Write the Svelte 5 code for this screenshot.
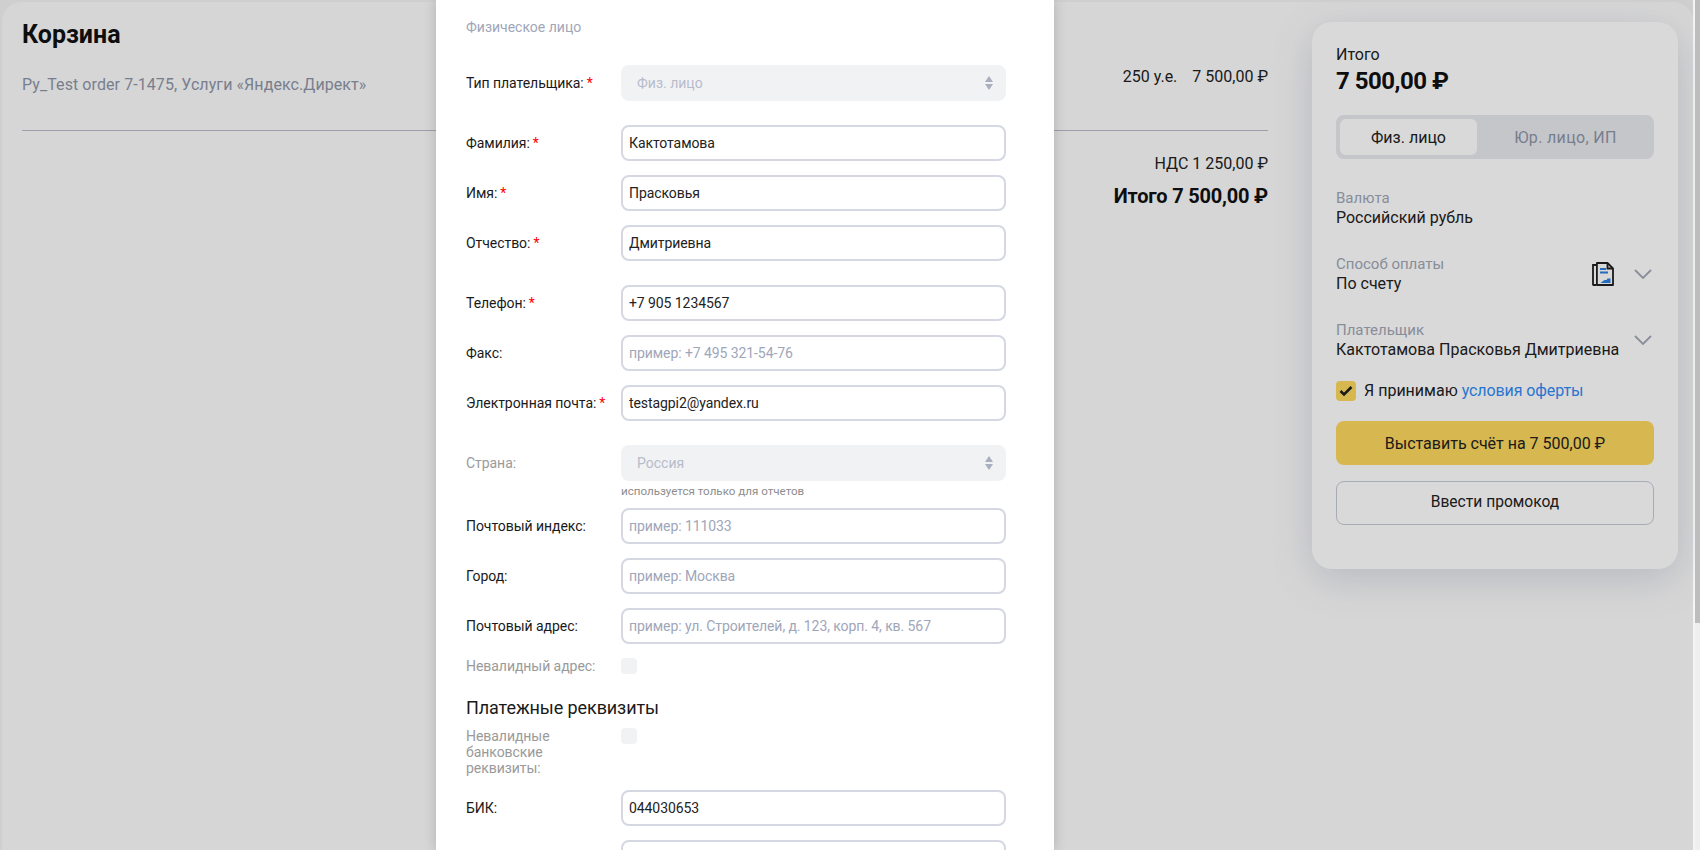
<script>
  const groups = [
    { gap: 24, rows: [
      { label: 'Фамилия:', required: true, value: 'Кактотамова' },
      { label: 'Имя:', required: true, value: 'Прасковья' },
      { label: 'Отчество:', required: true, value: 'Дмитриевна' },
    ] },
    { gap: 24, rows: [
      { label: 'Телефон:', required: true, value: '+7 905 1234567' },
      { label: 'Факс:', placeholder: 'пример: +7 495 321-54-76' },
      { label: 'Электронная почта:', required: true, value: 'testagpi2@yandex.ru' },
    ] },
  ];

  const addressRows = [
    { label: 'Почтовый индекс:', placeholder: 'пример: 111033' },
    { label: 'Город:', placeholder: 'пример: Москва' },
    { label: 'Почтовый адрес:', placeholder: 'пример: ул. Строителей, д. 123, корп. 4, кв. 567' },
  ];

  let payerType = $state('person');
</script>

{#snippet field(row)}
  <div class="row">
    <span class="label">{row.label}{#if row.required}<i class="req">*</i>{/if}</span>
    <input class="input" value={row.value ?? ''} placeholder={row.placeholder ?? ''} />
  </div>
{/snippet}

{#snippet selectBox(text)}
  <div class="select">
    <span>{text}</span>
    <svg width="10" height="16" viewBox="0 0 10 16"><path d="M5 1l4 6H1zM5 15l4-6H1z" fill="#a9afbf" /></svg>
  </div>
{/snippet}

<div class="page">
  <div class="shell">
    <main class="cart">
      <h1>Корзина</h1>
      <div class="order">
        <span class="order-name">Py_Test order 7-1475, Услуги «Яндекс.Директ»</span>
        <span class="order-price"><span>250 у.е.</span><span>7 500,00 ₽</span></span>
      </div>
      <div class="totals">
        <div class="vat">НДС 1 250,00 ₽</div>
        <div class="grand">Итого 7 500,00 ₽</div>
      </div>
    </main>

    <aside class="summary">
      <div class="sum-title">Итого</div>
      <div class="sum-value">7 500,00 ₽</div>
      <div class="tabs">
        <button class="tab" class:active={payerType === 'person'} onclick={() => (payerType = 'person')}>Физ. лицо</button>
        <button class="tab" class:active={payerType === 'company'} onclick={() => (payerType = 'company')}>Юр. лицо, ИП</button>
      </div>
      <div class="info first">
        <div class="info-text">
          <div class="info-label">Валюта</div>
          <div class="info-value">Российский рубль</div>
        </div>
      </div>
      <div class="info">
        <div class="info-text">
          <div class="info-label">Способ оплаты</div>
          <div class="info-value">По счету</div>
        </div>
        <svg class="doc" width="22" height="24" viewBox="0 0 22 24" fill="none">
          <path d="M4 3H1v19.500q0 .5.5.5H4" stroke="#1f1f1f" stroke-width="1.800" />
          <path d="M4.900 1h10.600L21 6.500V23H4.900z" stroke="#1f1f1f" stroke-width="1.800" stroke-linejoin="round" />
          <path d="M15.500 1v5.500H21" stroke="#1f1f1f" stroke-width="1.800" />
          <path d="M8 7h6M8 10.500h8" stroke="#2a7fe0" stroke-width="1.800" />
          <path d="M8.500 21l4-3h2l1-1.500h3V21z" fill="#2a7fe0" />
        </svg>
        <svg class="chev" width="18" height="10" viewBox="0 0 18 10" fill="none"><path d="M1 1l8 8 8-8" stroke="#a3a8b8" stroke-width="1.800" /></svg>
      </div>
      <div class="info">
        <div class="info-text">
          <div class="info-label">Плательщик</div>
          <div class="info-value">Кактотамова Прасковья Дмитриевна</div>
        </div>
        <svg class="chev" width="18" height="10" viewBox="0 0 18 10" fill="none"><path d="M1 1l8 8 8-8" stroke="#a3a8b8" stroke-width="1.800" /></svg>
      </div>
      <div class="accept">
        <span class="check">
          <svg width="14" height="12" viewBox="0 0 14 12" fill="none"><path d="M1.500 6l3.500 3.500L12.500 2" stroke="#1f1f1f" stroke-width="2.600" /></svg>
        </span>
        <span>Я принимаю <span class="link">условия оферты</span></span>
      </div>
      <button class="btn primary">Выставить счёт на 7 500,00 ₽</button>
      <button class="btn ghost">Ввести промокод</button>
    </aside>
  </div>

  <div class="overlay"></div>
  <div class="scrollbar"><div class="thumb"></div></div>

  <section class="modal">
    <div class="subtitle">Физическое лицо</div>
    <div class="row first-row">
      <span class="label">Тип плательщика:<i class="req">*</i></span>
      {@render selectBox('Физ. лицо')}
    </div>

    {#each groups as group}
      <div class="group" style="margin-top: {group.gap}px">
        {#each group.rows as row}
          {@render field(row)}
        {/each}
      </div>
    {/each}

    <div class="row country">
      <span class="label muted">Страна:</span>
      {@render selectBox('Россия')}
    </div>
    <div class="hint">используется только для отчетов</div>

    <div class="group">
      {#each addressRows as row}
        {@render field(row)}
      {/each}
    </div>

    <div class="row flag">
      <span class="label muted">Невалидный адрес:</span>
      <span class="box"></span>
    </div>

    <h2>Платежные реквизиты</h2>

    <div class="row flag bank">
      <span class="label muted">Невалидные<br />банковские<br />реквизиты:</span>
      <span class="box"></span>
    </div>

    <div class="group bik">
      {@render field({ label: 'БИК:', value: '044030653' })}
      {@render field({ label: '', value: '' })}
    </div>
  </section>
</div>

<style>
  :global(body) {
    margin: 0;
    font-family: Roboto, "Noto Sans", sans-serif;
  }

  .page {
    position: relative;
    width: 1700px;
    height: 850px;
    overflow: hidden;
    background: #f4f4f5;
    color: #111;
  }

  .shell {
    display: flex;
    box-sizing: border-box;
    width: 1691px;
    height: 900px;
    margin: 2px 0 0 2px;
    padding: 20px 15px 0 20px;
    background: #fcfcfc;
    border-radius: 20px 20px 0 0;
    gap: 44px;
  }

  .cart {
    flex: 1;
  }

  h1 {
    margin: 0;
    padding-top: 1px;
    font-size: 25px;
    line-height: 24px;
    font-weight: 700;
  }

  .order {
    display: flex;
    justify-content: space-between;
    padding: 20px 0 35px;
    border-bottom: 1px solid #b9bdc9;
    font-size: 16px;
    line-height: 20px;
  }

  .order-name {
    margin-top: 8px;
    color: #8e95a7;
    letter-spacing: 0.08px;
  }

  .order-price {
    display: flex;
    gap: 15px;
    color: #222;
  }

  .totals {
    padding-top: 23px;
    text-align: right;
  }

  .vat {
    font-size: 16px;
    line-height: 20px;
    color: #222;
  }

  .grand {
    margin-top: 10px;
    font-size: 20px;
    line-height: 24px;
    font-weight: 700;
    letter-spacing: -0.2px;
  }

  .summary {
    box-sizing: border-box;
    flex: none;
    width: 366px;
    height: 547px;
    padding: 23px 24px;
    background: #fff;
    border-radius: 20px;
    box-shadow: 0 10px 40px rgba(90, 100, 130, 0.22);
  }

  .sum-title {
    font-size: 16px;
    line-height: 20px;
    color: #222;
  }

  .sum-value {
    margin-top: 1px;
    font-size: 24px;
    line-height: 30px;
    font-weight: 700;
    letter-spacing: -0.5px;
  }

  .tabs {
    display: flex;
    margin-top: 19px;
    padding: 4px;
    height: 44px;
    box-sizing: border-box;
    background: #e8e9ee;
    border-radius: 8px;
  }

  .tab {
    flex: none;
    width: 137px;
    border: 0;
    border-radius: 6px;
    background: none;
    font: inherit;
    font-size: 16px;
    color: #8e95a7;
  }

  .tab:last-child {
    flex: 1;
    padding-left: 10px;
    letter-spacing: 0.35px;
  }

  .tab.active {
    background: #fff;
    color: #222;
  }

  .info {
    display: flex;
    align-items: center;
    margin-top: 28px;
  }

  .info.first {
    margin-top: 30px;
  }

  .info-text {
    flex: 1;
  }

  .info-label {
    font-size: 15px;
    line-height: 19px;
    color: #a0a6b6;
  }

  .info-value {
    font-size: 16px;
    line-height: 19px;
    color: #222;
  }

  .doc {
    margin-right: 20px;
  }

  .chev {
    margin-right: 2px;
  }

  .accept {
    display: flex;
    align-items: center;
    gap: 8px;
    margin-top: 22px;
    font-size: 16px;
    line-height: 20px;
    color: #222;
  }

  .check {
    display: flex;
    align-items: center;
    justify-content: center;
    width: 20px;
    height: 20px;
    background: #fcd85e;
    border-radius: 4px;
  }

  .link {
    color: #2f8bf5;
    letter-spacing: -0.1px;
  }

  .btn {
    display: block;
    width: 100%;
    height: 44px;
    border-radius: 8px;
    font: inherit;
    font-size: 16px;
    color: #222;
  }

  .primary {
    margin-top: 20px;
    border: 0;
    background: #fcd85e;
  }

  .ghost {
    margin-top: 16px;
    padding-bottom: 3px;
    border: 1px solid #c6cad6;
    background: none;
    font-size: 15.6px;
  }

  .overlay {
    position: absolute;
    inset: 0 7px 0 0;
    background: rgba(0, 0, 0, 0.15);
  }

  .scrollbar {
    position: absolute;
    top: 0;
    right: 0;
    width: 5px;
    height: 100%;
    background: #efefef;
  }

  .thumb {
    height: 623px;
    background: #bdbdbd;
  }

  .modal {
    position: absolute;
    top: 0;
    left: 436px;
    box-sizing: border-box;
    width: 618px;
    height: 850px;
    padding: 18px 48px 0 30px;
    background: #fff;
    box-shadow: 0 0 12px rgba(0, 0, 0, 0.18);
    font-size: 14px;
    color: #1a1a1a;
  }

  .subtitle {
    font-size: 14px;
    line-height: 18px;
    color: #a0a6b9;
  }

  .row {
    display: flex;
    align-items: center;
    height: 36px;
  }

  .first-row {
    margin-top: 29px;
  }

  .label {
    flex: none;
    width: 155px;
    line-height: 16px;
    letter-spacing: -0.05px;
  }

  .muted {
    color: #9a9a9a;
  }

  .req {
    margin-left: 3px;
    font-style: normal;
    color: #f00;
  }

  .group {
    display: flex;
    flex-direction: column;
    gap: 14px;
  }

  .input {
    box-sizing: border-box;
    flex: 1;
    min-width: 0;
    height: 36px;
    padding: 0 6px;
    border: 2px solid #d5d8e3;
    border-radius: 8px;
    background: #fff;
    outline: none;
    font: inherit;
    letter-spacing: -0.08px;
    color: #222;
  }

  .input::placeholder {
    color: #a0a6b9;
    opacity: 1;
  }

  .select {
    display: flex;
    flex: 1;
    align-items: center;
    justify-content: space-between;
    height: 36px;
    padding: 0 12px 0 16px;
    border-radius: 8px;
    background: #f1f2f4;
    color: #b7bccb;
  }

  .country {
    margin-top: 24px;
  }

  .hint {
    margin: 3px 0 10px 155px;
    font-size: 11.6px;
    line-height: 14px;
    color: #8d8d8d;
  }

  .flag {
    align-items: flex-start;
    height: auto;
    margin-top: 14px;
  }

  .box {
    width: 16px;
    height: 16px;
    border-radius: 4px;
    background: #f1f2f4;
  }

  h2 {
    margin: 22px 0 0;
    font-size: 18px;
    line-height: 24px;
    font-weight: 400;
    letter-spacing: -0.1px;
  }

  .bank {
    margin-top: 8px;
  }

  .bik {
    margin-top: 14px;
  }
</style>
